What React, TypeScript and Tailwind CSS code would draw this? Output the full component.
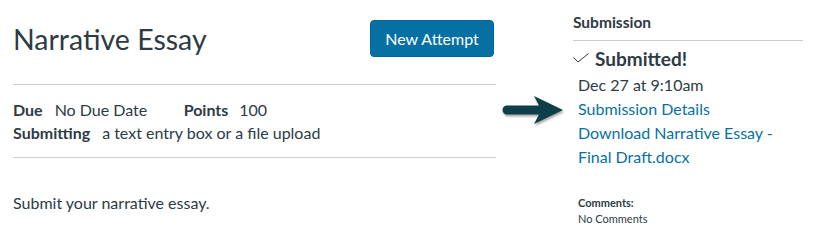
import React from "react";

const Arrow = () => (
    <svg width="66" height="32" viewBox="0 0 66 32" className="drop-shadow-[1px_2px_1px_rgba(0,0,0,0.35)]">
        <path d="M6 11.5 H38 L33 2 L62 16 L33 30 L38 20.5 H6 A4.5 4.5 0 0 1 6 11.5 Z" fill="#0e3f48" />
    </svg>
);

const App = () => {
    return (
        <div className="w-[818px] h-[240px] bg-white flex font-['Lato',sans-serif] text-[#2d3b45]">
            <div className="w-[483px] ml-[13px] flex flex-col">
                <div className="flex items-center justify-between pt-5 h-[57px]">
                    <h1 className="text-[28.5px] leading-none pt-[2px]">Narrative Essay</h1>
                    <button className="h-[37px] w-[124px] mr-[2px] bg-[#0770a3] rounded-[4px] border border-[#06649a] text-white text-[16px]">New Attempt</button>
                </div>
                <div className="mt-[27px] border-t border-[#c7cdd1]"></div>
                <div className="pt-[13px] text-[16px] leading-[23px] h-[72px]">
                    <div className="flex">
                        <span className="font-bold">Due</span>
                        <span className="ml-[12px] w-[129px]">No Due Date</span>
                        <span className="font-bold">Points</span>
                        <span className="ml-[11px]">100</span>
                    </div>
                    <div className="flex">
                        <span className="font-bold">Submitting</span>
                        <span className="ml-[12px]">a text entry box or a file upload</span>
                    </div>
                </div>
                <div className="border-t border-[#c7cdd1]"></div>
                <p className="mt-[33px] text-[16px]">Submit your narrative essay.</p>
            </div>
            <div className="w-[70px] ml-[3px] flex justify-center pt-[94px]">
                <Arrow />
            </div>
            <div className="w-[230px] ml-[4px] flex flex-col">
                <h2 className="pt-[12px] text-[15.5px] font-bold leading-5 pb-[8px] border-b border-[#c7cdd1]">Submission</h2>
                <div className="flex items-center mt-[5px] h-[26px]">
                    <svg width="16" height="10" viewBox="0 0 16 10" className="mr-[6px] mb-[2px]">
                        <path d="M0.5 4.5 L5 9 L15.5 0.5" fill="none" stroke="#2d3b45" strokeWidth="1" />
                    </svg>
                    <span className="text-[19px] font-bold">Submitted!</span>
                </div>
                <div className="pl-[5px] text-[16px] leading-[24px] mt-[1px]">
                    <div>Dec 27 at 9:10am</div>
                    <a className="block text-[#0770a3]">Submission Details</a>
                    <a className="block text-[#0770a3]">Download Narrative Essay -<br />Final Draft.docx</a>
                    <div className="mt-[26px] text-[11px] leading-4 font-bold">Comments:</div>
                    <div className="text-[11px] leading-4">No Comments</div>
                </div>
            </div>
        </div>
    );
};

export default App;
